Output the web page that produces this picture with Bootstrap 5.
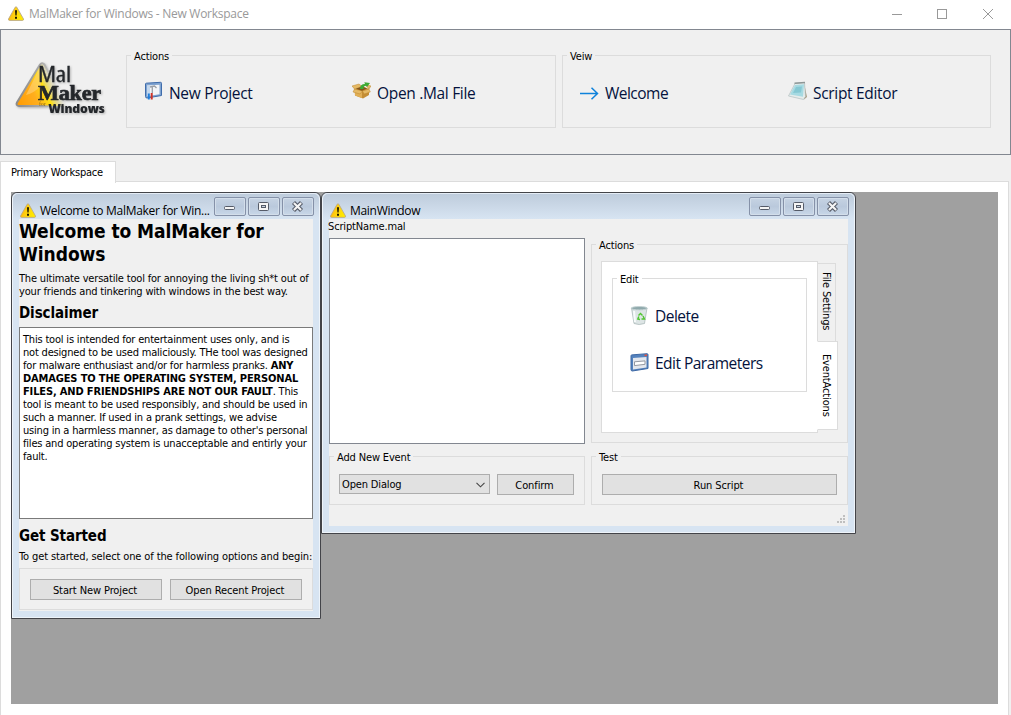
<!DOCTYPE html>
<html lang="en">
<head>
<meta charset="utf-8">
<title>MalMaker for Windows - New Workspace</title>
<link href="https://cdn.jsdelivr.net/npm/bootstrap@5.3.0/dist/css/bootstrap.min.css" rel="stylesheet">
<script src="https://cdn.jsdelivr.net/npm/bootstrap@5.3.0/dist/js/bootstrap.bundle.min.js"></script>
<style>
:root{--face:#f0f0f0;--line:#dcdcdc;--ui:"DejaVu Sans Condensed","DejaVu Sans",sans-serif;--segoe:"Open Sans","Noto Sans",sans-serif}
body{width:1011px;height:715px;overflow:hidden;background:var(--face);color:#000;font:11px/13px var(--ui);font-stretch:condensed;letter-spacing:-.15px}
svg{display:block;flex:none}
.app-title{height:29px;background:#fff;color:#999;font:12px/28px var(--segoe);letter-spacing:-.27px;padding-left:8px;gap:5px}
.app-title>svg{margin-top:-2px}
.app-title>span{margin-top:-1px}
.caption-btns{margin-left:auto;margin-top:-1px;padding-right:17px;gap:34px}
.toolframe{height:126px;border:1px solid #828790;padding:25px 19px 0 125px;gap:6px;position:relative}
.logo{position:absolute;left:11px;top:28px;filter:drop-shadow(1px 1px 1px #0004)}
.groupbox{position:relative;border:1px solid var(--line)}
.groupbox>.caption{position:absolute;top:-6px;left:4px;padding:0 3px;line-height:13px;background:var(--face);white-space:nowrap}
.toolgroup{height:73px;width:430px;padding:3px 0 0 17px}
.toolgroup:last-child{width:429px}
.cmd{flex:none;width:208px;font:15.5px/22px var(--segoe);letter-spacing:-.32px;gap:6px;color:#04123c;white-space:nowrap}
.toolgroup .cmd svg{margin-top:-4px}
.cmd.tight{letter-spacing:-.52px}
.tabstrip{height:27px;padding-top:6px}
.ws-tab{width:116px;height:22px;border:1px solid var(--line);border-bottom:0;background:#fff;line-height:21px;padding-left:10px;position:relative;z-index:1;letter-spacing:-.2px}
.ws-page{height:540px;width:1009px;margin-top:-1px;border:1px solid var(--line);background:#fff;padding:10px 10px 0}
.mdi{position:relative;width:987px;height:512px;background:#a0a0a0}
.sub{position:absolute;top:0;border:1px solid #434449;border-radius:6px 6px 0 0;background:#d7e4f2;box-shadow:inset 1px 1px #eef4fa,inset -1px -1px #eef4fa;padding:0 7px 7px}
.sub.win-a{left:0;width:310px;height:427px}
.sub.win-b{left:310px;width:535px;height:342px}
.sub-title{height:26px;margin:0 -6px;padding:4px 5px 0 7px;background:linear-gradient(#bdcbdb,#d7e4f2);border-radius:5px 5px 0 0;box-shadow:inset 0 1px #e4ecf5;gap:4px}
.sub-title .name{margin-top:7px;font:12px/13px var(--segoe);letter-spacing:-.3px;white-space:nowrap}
.sub-title .warn{margin-top:6px}
.sub-btns{margin-left:auto;gap:2px}
.sub-btns span{width:32px;height:19px;border:1px solid #8591a8;border-radius:2px;background:linear-gradient(#c6d3e3,#bac9dc 50%,#c8d7e8);box-shadow:inset 0 0 0 1px #d3deea}
.client{background:var(--face)}
.win-a .client{height:392px}
.win-b .client{height:307px;position:relative}
.win-a h1{font:bold 19px/23px var(--ui);letter-spacing:-.06px;height:46px;margin:0 0 7px;white-space:nowrap;padding-top:1px}
.win-a h2{font:bold 15px/19px var(--ui);letter-spacing:-.1px;margin:0;white-space:nowrap}
.win-a h2.disc{margin:6px 0 4px}
.win-a p{margin:0;white-space:nowrap}
.win-a .intro{letter-spacing:-.18px}
.win-a .begin{margin:4px 0 5px;letter-spacing:-.12px}
.textbox{border:1px solid #7a7a7a;background:#fff;height:192px;padding:5px 3px;white-space:nowrap;letter-spacing:-.19px}
.textbox b{letter-spacing:-.15px}
.flatbtn{background:#e1e1e1;border:1px solid #adadad;height:21px;line-height:21px;text-align:center;white-space:nowrap;padding-right:2px;letter-spacing:-.1px}
.startbox{height:42px;padding:10px 10px 0;gap:8px}
.startbox .flatbtn{width:132px}
.scriptname{height:19px;padding-top:1px;margin-left:-1px}
.upper,.lower{gap:6px}
.lower{margin-top:12px}
.listpane{width:256px;height:206px;border:1px solid #828790;background:#fff}
.actions{width:257px;height:199px;margin-top:6px;padding:16px 0 0 9px}
.tabpane{width:217px;height:172px;border:1px solid var(--line);background:#fff;padding:16px 10px 0}
.editbox{width:195px;height:114px;padding:24px 0 0 17px}
.editbox>.caption{background:#fff}
.editbox .cmd{width:170px;height:25px;margin-bottom:22px}
.vtabs{margin-left:-1px;padding-top:2px}
.vtab{writing-mode:vertical-rl;border:1px solid var(--line);white-space:nowrap;line-height:16px}
.vtab.one{width:19px;height:79px;padding:8px 1px 0 0}
.vtab.two{width:21px;height:89px;margin-top:-1px;background:#fff;border-left-color:#fff;padding:12px 3px 0 0}
.bottombox{height:49px;padding:17px 9px 0}
.addbox{width:256px;gap:7px}
.testbox{width:257px;padding-left:10px;padding-right:10px}
.confirm{width:77px}
.combo{width:151px;height:20px;background:#e1e1e1;border:1px solid #adadad;line-height:20px;padding:1px 4px 0 2px}
.grip{position:absolute;right:2px;bottom:2px}
</style>
</head>
<body>
<svg width="0" height="0" class="position-absolute">
 <defs>
  <linearGradient id="gold" x1="0" x2="1" y1="0" y2=".3"><stop offset="0" stop-color="#ffa800"/><stop offset=".5" stop-color="#ffcf10"/><stop offset="1" stop-color="#ffe900"/></linearGradient>
  <symbol id="warn" viewBox="0 0 16 15"><path d="M7.2 1.200Q8 .2 8.800 1.200L15.500 13Q15.800 14.300 14.600 14.400H1.400Q.2 14.300.5 13Z" fill="url(#gold)" stroke="#b9a98a" stroke-width=".9"/><path d="M7 4.400Q8 3.600 9 4.400L8.600 9.600H7.400ZM7 10.800h2v2H7Z" fill="#201800"/></symbol>
  <symbol id="b-min" viewBox="0 0 30 17"><rect x="9.500" y="8.500" width="10" height="3" rx="1" fill="#f5f5f5" stroke="#555b68"/></symbol>
  <symbol id="b-max" viewBox="0 0 30 17"><rect x="9.500" y="4.500" width="10" height="8" rx="1" fill="#f5f5f5" stroke="#555b68"/><rect x="12.500" y="7.500" width="4" height="2" fill="#c8d4e2" stroke="#555b68"/></symbol>
  <symbol id="b-close" viewBox="0 0 30 17"><path d="M10.500 4.500l8 8M18.500 4.500l-8 8" stroke="#555b68" stroke-width="4.300"/><path d="M10.900 4.900l7.200 7.200M18.100 4.900l-7.200 7.200" stroke="#f5f5f5" stroke-width="2.100"/></symbol>
 </defs>
</svg>

<header class="app-title d-flex align-items-center">
 <svg width="16" height="15"><use href="#warn"/></svg><span>MalMaker for Windows - New Workspace</span>
 <div class="caption-btns d-flex align-items-center">
  <svg width="12" height="12" stroke="#999" fill="none"><path d="M2 6.500h10"/></svg>
  <svg width="12" height="12" stroke="#999" fill="none"><rect x="1.500" y="1.500" width="9" height="9"/></svg>
  <svg width="12" height="12" stroke="#999" fill="none"><path d="M1 1l10 10M11 1L1 11"/></svg>
 </div>
</header>

<section class="toolframe d-flex">
 <svg class="logo" width="100" height="64" viewBox="0 0 100 64">
  <defs><linearGradient id="tri" x1="0" x2="1" y1="1" y2=".6"><stop offset="0" stop-color="#ff9a00"/><stop offset=".4" stop-color="#ffae1e"/><stop offset=".62" stop-color="#ffe010"/><stop offset=".9" stop-color="#f0f0f0" stop-opacity="0"/></linearGradient>
  <linearGradient id="edge" x1="0" x2="1"><stop offset="0" stop-color="#8b8b8b"/><stop offset=".5" stop-color="#a9a9a9"/><stop offset=".8" stop-color="#aaa" stop-opacity="0"/></linearGradient></defs>
  <path d="M28 6.500Q30 4 32.500 6.500L54 48H7Q3.500 47.500 5 44.500Z" fill="url(#tri)" stroke="url(#edge)" stroke-width="2"/>
  <path d="M26 13l3-5v20q-7 7-15 9Z" fill="#ffd27a" opacity=".6"/>
  <g fill="#24272b">
   <text x="26" y="23.500" font-family="Open Sans" font-weight="500" font-size="22" stroke="#24272b" stroke-width=".3" textLength="33" lengthAdjust="spacingAndGlyphs">Mal</text>
   <text x="26" y="41.500" font-family="Liberation Serif" font-weight="bold" font-size="22" stroke="#24272b" stroke-width=".7" textLength="63" lengthAdjust="spacingAndGlyphs">Maker</text>
   <text x="27" y="48" font-family="Liberation Serif" font-size="6" fill="#8a6a10">for</text>
   <text x="36.500" y="54.500" font-family="Open Sans" font-weight="800" font-size="12.500" textLength="56" lengthAdjust="spacingAndGlyphs">Windows</text>
  </g>
 </svg>
 <div class="groupbox toolgroup d-flex align-items-center"><span class="caption">Actions</span>
  <div class="cmd d-flex align-items-center">
   <svg width="19" height="20" viewBox="0 0 19 20"><path d="M1.500 3Q1.500 2.300 2.300 2.200L16.500 1.300Q17.500 1.300 17.500 2.300V14.500L3 17Q1.500 17 1.500 15.500Z" fill="#7fa3d0" stroke="#3f6cab"/><path d="M3 4.500L15.500 3.800V13.300L3 15.300Z" fill="#f3f5f8"/><path d="M3 5v10l3-.5V5Z" fill="#c4d8ee"/><path d="M6 6l4.500-1 2 2M8.300 6v6" stroke="#9a9fa6" stroke-width="1.300" fill="none"/><path d="M7.700 12v6.500" stroke="#cf3327" stroke-width="2"/><path d="M4.800 12.500v6" stroke="#1f7edb" stroke-width="2"/></svg>
   <span>New Project</span></div>
  <div class="cmd d-flex align-items-center">
   <svg width="19" height="20" viewBox="0 0 19 20"><path d="M2.500 8L10 5l7 3v6l-6 3.500L3 14.500Z" fill="#c48d35"/><path d="M3 8.300l7 2.200V17L3 14.500Z" fill="#e0ae55"/><path d="M2.500 8L0 5l7-2 3 2.500ZM17 8l2-3-6-1.500ZM2.500 8L1 11l7 2 2.500-3ZM17 8l1.300 3-6 2-2-3Z" fill="#e5b965" stroke="#bd872d" stroke-width=".5"/><path d="M4 7.700L10 5.500l5 2-5 2.200Z" fill="#80551d"/><path d="M8 8Q8 3 13 3l-.7-1.800L18 2l-3 4-.8-1.300Q11 5 11.500 8Z" fill="#3eaa35"/></svg>
   <span>Open .Mal File</span></div>
 </div>
 <div class="groupbox toolgroup d-flex align-items-center"><span class="caption">Veiw</span>
  <div class="cmd tight d-flex align-items-center">
   <svg width="19" height="20" viewBox="0 0 19 20" fill="none" stroke="#0e82db" stroke-width="1.500"><path d="M0 12.500h17M11.500 6.700l6 5.800-6 5.800"/></svg>
   <span>Welcome</span></div>
  <div class="cmd d-flex align-items-center">
   <svg width="19" height="20" viewBox="0 0 19 20"><path d="M16 2l3 14-3 2.500Z" fill="#a99c82"/><path d="M7 2.500l9.500-1 1 14-2 3L.5 15Z" fill="#e5eceb" stroke="#a8b7b8" stroke-width=".6"/><path d="M7 4l9-.7-1 12.500L2 13.500Z" fill="#a6dae2"/><path d="M8 6l6-.5-1 6-8 .5Z" fill="#78c1cd" opacity=".7"/><path d="M6.500 2.300l10.500-.8" stroke="#8d9696" stroke-width="1.600"/></svg>
   <span>Script Editor</span></div>
 </div>
</section>

<nav class="tabstrip"><div class="ws-tab">Primary Workspace</div></nav>
<main class="ws-page">
 <div class="mdi">
  <section class="sub win-a">
   <div class="sub-title d-flex align-items-start"><svg class="warn" width="16" height="15"><use href="#warn"/></svg><span class="name">Welcome to MalMaker for Win...</span>
    <div class="sub-btns d-flex"><span><svg width="30" height="17"><use href="#b-min"/></svg></span><span><svg width="30" height="17"><use href="#b-max"/></svg></span><span><svg width="30" height="17"><use href="#b-close"/></svg></span></div></div>
   <div class="client">
    <h1>Welcome to MalMaker for<br>Windows</h1>
    <p class="intro">The ultimate versatile tool for annoying the living sh*t out of<br>your friends and tinkering with windows in the best way.</p>
    <h2 class="disc">Disclaimer</h2>
    <div class="textbox">This tool is intended for entertainment uses only, and is<br>not designed to be used maliciously. THe tool was designed<br>for malware enthusiast and/or for harmless pranks. <b>ANY<br>DAMAGES TO THE OPERATING SYSTEM, PERSONAL<br>FILES, AND FRIENDSHIPS ARE NOT OUR FAULT</b>. This<br>tool is meant to be used responsibly, and should be used in<br>such a manner. If used in a prank settings, we advise<br>using in a harmless manner, as damage to other's personal<br>files and operating system is unacceptable and entirly your<br>fault.</div>
    <h2 class="pt-2">Get Started</h2>
    <p class="begin">To get started, select one of the following options and begin:</p>
    <div class="groupbox startbox d-flex"><div class="flatbtn">Start New Project</div><div class="flatbtn">Open Recent Project</div></div>
   </div>
  </section>

  <section class="sub win-b">
   <div class="sub-title d-flex align-items-start"><svg class="warn" width="16" height="15"><use href="#warn"/></svg><span class="name">MainWindow</span>
    <div class="sub-btns d-flex"><span><svg width="30" height="17"><use href="#b-min"/></svg></span><span><svg width="30" height="17"><use href="#b-max"/></svg></span><span><svg width="30" height="17"><use href="#b-close"/></svg></span></div></div>
   <div class="client">
    <div class="scriptname">ScriptName.mal</div>
    <div class="d-flex upper">
     <div class="listpane"></div>
     <div class="groupbox actions d-flex align-items-start"><span class="caption">Actions</span>
      <div class="tabpane">
       <div class="groupbox editbox"><span class="caption">Edit</span>
        <div class="cmd tight d-flex align-items-center">
         <svg width="19" height="20" viewBox="0 0 19 20"><path d="M1.500 2L17 2 14.500 17.500Q9 19.500 4 17.500Z" fill="#dde5e5" stroke="#a3b3b3" stroke-width=".7"/><ellipse cx="9.300" cy="2.200" rx="8" ry="1.700" fill="#8fa9ac" stroke="#c4d2d3"/><path d="M4 5l1 11" stroke="#f8fbfb" stroke-width="2"/><path d="M8.500 9.500l2-2 2 2M13 10l1.500 3h-3M10 13.500L7.800 13l1-2.500" fill="none" stroke="#50c52f" stroke-width="1.400"/></svg>
         <span>Delete</span></div>
        <div class="cmd tight d-flex align-items-center">
         <svg width="19" height="20" viewBox="0 0 19 20"><path d="M1 2.700Q1 2 1.800 1.900L17 .7Q18 .7 18 1.700V15.500L2.300 18Q1 18 1 16.500Z" fill="#5482bd" stroke="#3d68a5"/><path d="M3 5L16.500 4v10.500L3 16.500Z" fill="#e3e7ee"/><path d="M4.500 8.800l10.500-.9v3.400l-10.500 1.300Z" fill="#fff" stroke="#8a8f98" stroke-width=".9"/><path d="M14.500 2.300h2.500" stroke="#e0523f" stroke-width="1.600"/></svg>
         <span>Edit Parameters</span></div>
       </div>
      </div>
      <div class="vtabs"><div class="vtab one">File Settings</div><div class="vtab two">EventActions</div></div>
     </div>
    </div>
    <div class="d-flex lower">
     <div class="groupbox bottombox addbox d-flex"><span class="caption">Add New Event</span>
      <div class="combo d-flex align-items-center justify-content-between"><span>Open Dialog</span><svg width="9" height="6" fill="none" stroke="#444" stroke-width="1.100"><path d="M.5.8l4 4 4-4"/></svg></div>
      <div class="flatbtn confirm">Confirm</div></div>
     <div class="groupbox bottombox testbox"><span class="caption">Test</span><div class="flatbtn">Run Script</div></div>
    </div>
    <svg class="grip" width="9" height="9" fill="#bfbfbf"><path d="M6 0h2v2H6zM6 3h2v2H6zM3 3h2v2H3zM6 6h2v2H6zM3 6h2v2H3zM0 6h2v2H0z"/></svg>
   </div>
  </section>
 </div>
</main>
</body>
</html>
